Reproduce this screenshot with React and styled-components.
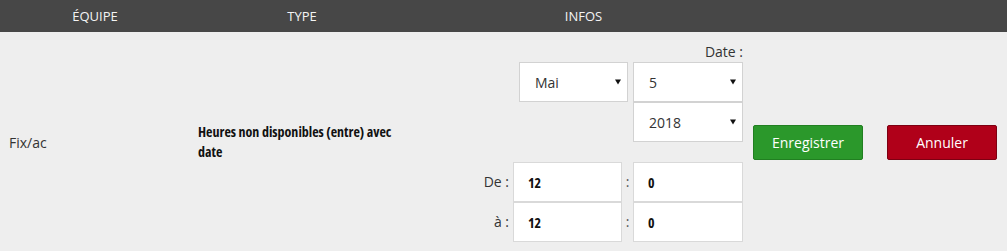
import React from 'react';
import styled, { createGlobalStyle } from 'styled-components';

const GlobalStyle = createGlobalStyle`
  body {
    margin: 0;
    background: #eeeeee;
    font-family: "Open Sans", "Liberation Sans", sans-serif;
    color: #333;
  }
`;

const Table = styled.div`
  width: 1007px;
`;

const Grid = styled.div`
  display: grid;
  grid-template-columns: 190px 224px 339px 1fr;
`;

const HeadRow = styled(Grid)`
  background: #474747;
  height: 32px;
`;

const HeadCell = styled.div`
  color: #f4f4f4;
  font-size: 13px;
  line-height: 32px;
  text-align: center;
  text-transform: uppercase;
`;

const BodyRow = styled(Grid)`
  background: #eeeeee;
  min-height: 220px;
`;

const Cell = styled.div`
  display: flex;
  align-items: center;
  padding: 0 8px;
  font-size: 14px;
`;

const TeamCell = styled(Cell)`
  padding-left: 9px;
  color: #333;
`;

const TypeCell = styled(Cell)`
  font-weight: 700;
  font-stretch: 75%;
  line-height: 20px;
  color: #111;
`;

const InfoCell = styled.div`
  display: flex;
  flex-direction: column;
  align-items: flex-end;
  padding: 10px 10px 10px 0;
  font-size: 14px;
`;

const DateLabel = styled.div`
  line-height: 20px;
  color: #333;
`;

const DateGrid = styled.div`
  display: grid;
  grid-template-columns: 109px 110px;
  column-gap: 5px;
`;

const SelectWrap = styled.div`
  position: relative;
  grid-column: ${(p) => p.$col || 'auto'};

  &::after {
    content: '';
    position: absolute;
    right: 7px;
    top: 50%;
    transform: translateY(-50%);
    border-left: 3px solid transparent;
    border-right: 3px solid transparent;
    border-top: 5px solid #111;
    pointer-events: none;
  }
`;

const Select = styled.select`
  appearance: none;
  display: block;
  width: 100%;
  height: 40px;
  margin: 0;
  padding: 0 0 0 15px;
  border: 1px solid #d2d2d2;
  border-radius: 0;
  background: #fff;
  font-family: "Open Sans", "Liberation Sans", sans-serif;
  font-size: 14px;
  color: #333;
`;

const TimeGrid = styled.div`
  display: grid;
  grid-template-columns: auto 109px 11px 110px;
  margin-top: 20px;
`;

const TimeLabel = styled.div`
  text-align: right;
  padding-right: 4px;
  line-height: 40px;
  color: #333;
`;

const Colon = styled.div`
  text-align: center;
  line-height: 40px;
  color: #555;
`;

const TimeInput = styled.input`
  box-sizing: border-box;
  width: 100%;
  height: 40px;
  margin: 0;
  padding: 0 0 0 14px;
  border: 1px solid #d9d9d9;
  background: #fff;
  font-family: "Open Sans", "Liberation Sans", sans-serif;
  font-size: 14px;
  font-weight: 700;
  font-stretch: 75%;
  color: #111;
  outline: none;
`;

const Actions = styled.div`
  display: flex;
  align-items: center;
  gap: 24px;
`;

const Button = styled.button`
  width: 110px;
  height: 35px;
  border-radius: 2px;
  border: 1px solid ${(p) => (p.$variant === 'danger' ? '#7d0012' : '#217f21')};
  background: ${(p) => (p.$variant === 'danger' ? '#b00019' : '#2b982b')};
  color: #fff;
  font-family: "Open Sans", "Liberation Sans", sans-serif;
  font-size: 14px;
  cursor: pointer;
`;

const App = () => {
  return (
    <>
      <GlobalStyle />
      <Table>
        <HeadRow>
          <HeadCell>Équipe</HeadCell>
          <HeadCell>Type</HeadCell>
          <HeadCell>Infos</HeadCell>
          <HeadCell />
        </HeadRow>
        <BodyRow>
          <TeamCell>Fix/ac</TeamCell>
          <TypeCell>Heures non disponibles (entre) avec date</TypeCell>
          <InfoCell>
            <DateLabel>Date :</DateLabel>
            <DateGrid>
              <SelectWrap>
                <Select defaultValue="Mai">
                  <option>Avril</option>
                  <option>Mai</option>
                  <option>Juin</option>
                </Select>
              </SelectWrap>
              <SelectWrap>
                <Select defaultValue="5">
                  <option>4</option>
                  <option>5</option>
                  <option>6</option>
                </Select>
              </SelectWrap>
              <SelectWrap $col="2">
                <Select defaultValue="2018">
                  <option>2017</option>
                  <option>2018</option>
                  <option>2019</option>
                </Select>
              </SelectWrap>
            </DateGrid>
            <TimeGrid>
              <TimeLabel>De :</TimeLabel>
              <TimeInput defaultValue="12" />
              <Colon>:</Colon>
              <TimeInput defaultValue="0" />
              <TimeLabel>à :</TimeLabel>
              <TimeInput defaultValue="12" />
              <Colon>:</Colon>
              <TimeInput defaultValue="0" />
            </TimeGrid>
          </InfoCell>
          <Actions>
            <Button>Enregistrer</Button>
            <Button $variant="danger">Annuler</Button>
          </Actions>
        </BodyRow>
      </Table>
    </>
  );
};

export default App;
